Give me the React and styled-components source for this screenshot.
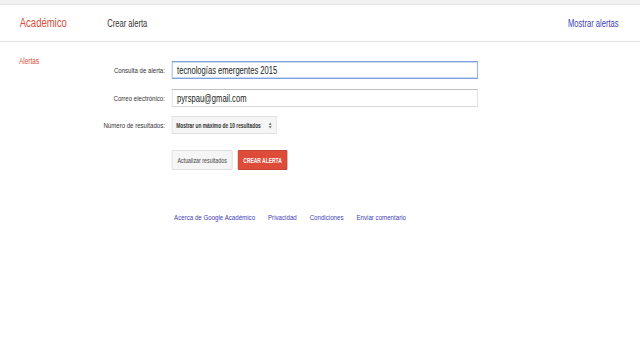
import React from "react";
import styled, { createGlobalStyle } from "styled-components";

const Global = createGlobalStyle`
  html, body { margin: 0; padding: 0; background: #fff; overflow: hidden; }
  body { font-family: "Liberation Sans", Arial, sans-serif; }
  * { box-sizing: border-box; }
`;

/* The whole page is drawn at 842px wide and squeezed horizontally to 640px,
   as the reference capture is. */
const Page = styled.div`
  width: 842px;
  transform: scaleX(0.76);
  transform-origin: 0 0;
`;

const TopStrip = styled.div`
  height: 5px;
  background: #f1f1f1;
  border-bottom: 1px solid #e5e5e5;
`;

const Header = styled.header`
  height: 37px;
  display: flex;
  align-items: center;
  border-bottom: 1px solid #e5e5e5;
  padding: 0 28px 0 26px;
`;

const Logo = styled.div`
  color: #dd4b39;
  font-size: 12.5px;
  width: 115px;
`;

const NavTitle = styled.div`
  color: #333;
  font-size: 10px;
  flex: 1;
`;

const Link = styled.a`
  color: #4040b8;
  font-size: ${(p) => p.$size || "8.1px"};
  text-decoration: none;
  white-space: nowrap;
  cursor: pointer;
`;

const Main = styled.main`
  display: flex;
  padding-top: 13px;
`;

const Sidebar = styled.div`
  width: 132px;
  padding-left: 25px;
  padding-top: 1px;
  color: #dd4b39;
  font-size: 8.5px;
`;

const Form = styled.div`
  display: grid;
  grid-template-columns: 85px 403px;
  column-gap: 9px;
  row-gap: 10px;
  align-items: center;
  padding-top: 6px;
`;

const Label = styled.label`
  text-align: right;
  font-size: 8px;
  color: #333;
  white-space: nowrap;
`;

const TextInput = styled.div`
  height: 18px;
  border: 1px solid ${(p) => (p.$focus ? "#7f9ee0" : "#d9d9d9")};
  border-top-color: ${(p) => (p.$focus ? "#7f9ee0" : "#c0c0c0")};
  display: flex;
  align-items: center;
  padding-left: 6px;
  font-size: 10px;
  color: #222;
  white-space: nowrap;
  ${(p) => p.$focus && "box-shadow: inset 0.5px 0.5px 0 0 #9fb6ea, inset -0.5px -0.5px 0 0 #9fb6ea;"}
`;

const Select = styled.div`
  height: 18px;
  width: 138px;
  margin: -1px 0;
  border: 1px solid #e0e0e0;
  background: #f5f5f5;
  display: flex;
  align-items: center;
  justify-content: space-between;
  padding: 0 5px 0 5px;
  font-size: 6.4px;
  color: #333;
  font-weight: 700;
  white-space: nowrap;
`;

const Arrows = styled.svg`
  width: 5px;
  height: 7px;
`;

const Buttons = styled.div`
  grid-column: 2;
  display: flex;
  gap: 7px;
  margin-top: 7px;
`;

const Button = styled.button`
  height: 20px;
  padding: 0;
  width: ${(p) => p.$w}px;
  font-family: inherit;
  font-size: ${(p) => (p.$primary ? "6.5px" : "7px")};
  white-space: nowrap;
  border-radius: 1px;
  border: 1px solid ${(p) => (p.$primary ? "#c53727" : "#dcdcdc")};
  background: ${(p) => (p.$primary ? "#dd4b39" : "#f5f5f5")};
  color: ${(p) => (p.$primary ? "#fff" : "#444")};
  font-weight: ${(p) => (p.$primary ? 700 : 400)};
`;

const Footer = styled.footer`
  display: flex;
  gap: 17px;
  padding: 43px 0 0 229px;
`;

export default function App() {
  return (
    <>
      <Global />
      <Page>
        <TopStrip />
        <Header>
          <Logo>Académico</Logo>
          <NavTitle>Crear alerta</NavTitle>
          <Link $size="10px">Mostrar alertas</Link>
        </Header>
        <Main>
          <Sidebar>Alertas</Sidebar>
          <Form>
            <Label>Consulta de alerta:</Label>
            <TextInput $focus>tecnologías emergentes 2015</TextInput>
            <Label>Correo electrónico:</Label>
            <TextInput>pyrspau@gmail.com</TextInput>
            <Label>Número de resultados:</Label>
            <Select>
              <span>Mostrar un máximo de 10 resultados</span>
              <Arrows viewBox="0 0 5 7">
                <path d="M0.5 3 L2.5 0.5 L4.5 3 Z M0.5 4 L2.5 6.5 L4.5 4 Z" fill="#777" />
              </Arrows>
            </Select>
            <Buttons>
              <Button $w={80}>Actualizar resultados</Button>
              <Button $w={65} $primary>CREAR ALERTA</Button>
            </Buttons>
          </Form>
        </Main>
        <Footer>
          <Link>Acerca de Google Académico</Link>
          <Link>Privacidad</Link>
          <Link>Condiciones</Link>
          <Link>Enviar comentario</Link>
        </Footer>
      </Page>
    </>
  );
}
